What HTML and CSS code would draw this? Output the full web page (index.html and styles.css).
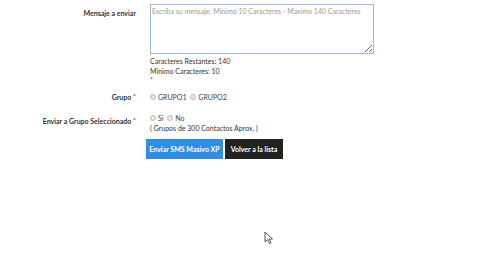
FILE: index.html
```html
<!DOCTYPE html>
<html lang="es">
<head>
    <meta charset="UTF-8">
    <title>Enviar SMS Masivo</title>
    <link rel="stylesheet" href="styles.css">
</head>
<body>
    <form class="sms-form">
        <div class="form-row">
            <label class="row-label" for="mensaje">Mensaje a enviar</label>
            <div class="row-field">
                <textarea id="mensaje" class="msg-box" placeholder="Escriba su mensaje. Minimo 10 Caracteres - Maximo 140 Caracteres"></textarea>
                <div class="help-line">Caracteres Restantes: 140</div>
                <div class="help-line">Minimo Caracteres: 10</div>
                <div class="req">*</div>
            </div>
        </div>

        <div class="form-row row-grupo">
            <label class="row-label">Grupo <span class="req">*</span></label>
            <div class="row-field">
                <span class="radio"><span class="dot"></span>GRUPO1</span>
                <span class="radio"><span class="dot"></span>GRUPO2</span>
            </div>
        </div>

        <div class="form-row row-enviar">
            <label class="row-label">Enviar a Grupo Seleccionado <span class="req">*</span></label>
            <div class="row-field">
                <span class="radio"><span class="dot"></span>Si</span>
                <span class="radio"><span class="dot"></span>No</span>
                <div class="help-line">( Grupos de 300 Contactos Aprox. )</div>
            </div>
        </div>

        <div class="form-actions">
            <button type="button" class="btn btn-blue">Enviar SMS Masivo XP</button>
            <button type="button" class="btn btn-dark">Volver a la lista</button>
        </div>
    </form>

    <svg class="cursor" width="10" height="14" viewBox="0 0 10 14">
        <path d="M1 1 L1 11 L3.5 8.5 L5.5 12.5 L7 11.8 L5 8 L8.5 8 Z" fill="#fff" stroke="#555" stroke-width="1"/>
    </svg>
</body>
</html>
```

FILE: styles.css
```css
* {
    margin: 0;
    padding: 0;
    box-sizing: border-box;
}

body {
    font-family: 'Lato', 'Open Sans', sans-serif;
    font-size: 7px;
    line-height: 10px;
    color: #333;
    background: #fff;
    width: 500px;
    height: 280px;
    position: relative;
    overflow: hidden;
}

.sms-form {
    padding-top: 4px;
}

.form-row {
    display: grid;
    grid-template-columns: 136px 1fr;
    column-gap: 14px;
}

.row-label {
    text-align: right;
    font-weight: bold;
    color: #333;
    white-space: nowrap;
}

.row-label[for="mensaje"] {
    padding-top: 4px;
}

.msg-box {
    display: block;
    width: 224px;
    height: 50px;
    border: 1px solid #9db8e8;
    font-family: inherit;
    font-size: 7px;
    line-height: 10px;
    padding: 1px 1px;
    resize: both;
    color: #333;
}

.msg-box::placeholder {
    color: #999;
}

.msg-box + .help-line {
    margin-top: 2px;
}

.req {
    color: #e02020;
    font-weight: normal;
}

.row-field > .req {
    line-height: 8px;
}

.row-grupo {
    margin-top: 8px;
}

.row-enviar {
    margin-top: 11px;
}

.row-enviar .row-label {
    padding-top: 3px;
}

.radio {
    display: inline-flex;
    align-items: center;
    margin-right: 2px;
    color: #444;
}

.dot {
    width: 6px;
    height: 6px;
    border-radius: 50%;
    border: 1px solid #bbb;
    background: #e8e8e8;
    margin-right: 2px;
}

.form-actions {
    margin-top: 6px;
    margin-left: 146px;
    display: flex;
    gap: 2px;
}

.btn {
    height: 20px;
    border: none;
    font-family: inherit;
    font-size: 7px;
    font-weight: bold;
    color: #fff;
    padding: 0;
    white-space: nowrap;
}

.btn-blue {
    background: #2f8de4;
    width: 77px;
}

.btn-dark {
    background: #222;
    width: 58px;
}

.cursor {
    position: absolute;
    left: 264px;
    top: 231px;
}
```
